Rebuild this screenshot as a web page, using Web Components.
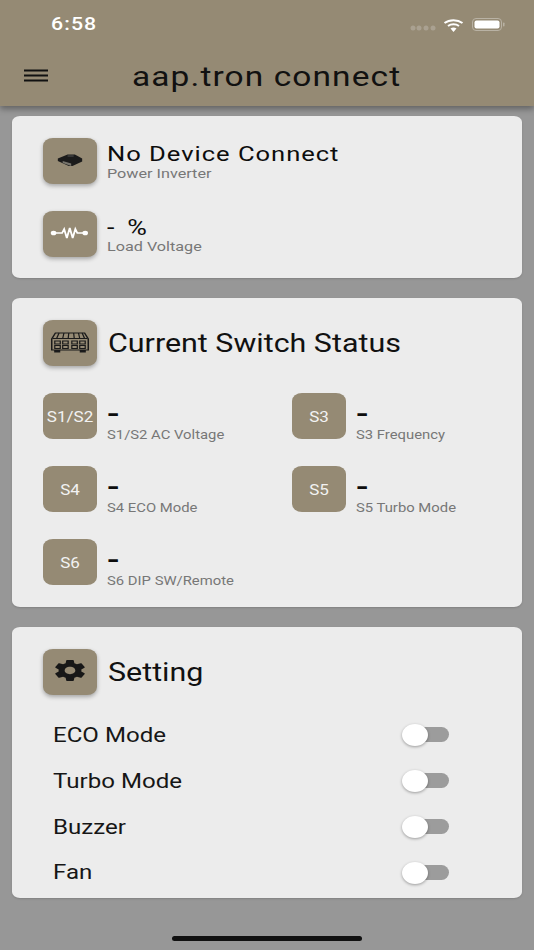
<!DOCTYPE html>
<html>
<head>
<meta charset="utf-8">
<title>aap.tron connect</title>
<style>
html, body { margin: 0; padding: 0; }
body {
    width: 534px;
    height: 950px;
    overflow: hidden;
    background: #979797;
    font-family: Roboto, "Liberation Sans", sans-serif;
    display: flex;
    flex-direction: column;
}
main { display: flex; flex-direction: column; gap: 20px; padding: 10px 12px 0; }
</style>
</head>
<body>
<app-bar title="aap.tron connect" time="6:58"></app-bar>
<main>
    <info-card style="--pad-bottom:21px">
        <stat-row value="No Device Connect" label="Power Inverter" wide>
            <svg viewBox="0 0 54 46" width="54" height="46">
                <path d="M17 21.500l8-4h6l6 4v3l-8 4.500h-3l-9-5z" fill="#1b1b1b"/>
                <path d="M21 24l7 2.500v2.500l-7-3z" fill="#77746c"/>
                <path d="M25 19h5" stroke="#555" stroke-width="1"/>
            </svg>
        </stat-row>
        <stat-row value="- %" label="Load Voltage" wide>
            <svg viewBox="0 0 54 46" width="54" height="46">
                <circle cx="13.500" cy="23" r="2.300" fill="#fff"/>
                <circle cx="39.500" cy="23" r="2.300" fill="#fff"/>
                <path d="M14 23h6.500l1.700-4 2.200 9 2.400-10 2.400 10 2.200-9 1.600 4h6" fill="none" stroke="#fff" stroke-width="1.500"/>
            </svg>
        </stat-row>
    </info-card>

    <info-card style="--pad-bottom:22px">
        <card-heading text="Current Switch Status">
            <svg viewBox="0 0 54 46" width="54" height="46" fill="none" stroke="#1a1a1a" stroke-width="1">
                <path d="M15 14h24l3 6v11H12V20z" stroke-width="1.200"/>
                <path d="M13 19.500h28M18 14l-2 5.500M22 14l-1 5.500M26 14l-.5 5.500M30 14l.5 5.500M34 14l1 5.500M37 14l2 5.500"/>
                <path d="M14 31h5v2.500h-5zM35 31h5v2.500h-5z" fill="#1a1a1a" stroke="none"/>
                <path d="M14.500 22h4.500v3h-4.500zM14.500 26.500h4.500v3h-4.500zM21 22h4.500v3H21zM21 26.500h4.500v3H21zM28.500 22H33v3h-4.500zM28.500 26.500H33v3h-4.500zM35 22h4.500v3H35zM35 26.500h4.500v3H35z"/>
            </svg>
        </card-heading>
        <div style="display:grid;grid-template-columns:249px 1fr;row-gap:27px">
            <stat-row value="-" label="S1/S2 AC Voltage" tile="S1/S2"></stat-row>
            <stat-row value="-" label="S3 Frequency" tile="S3"></stat-row>
            <stat-row value="-" label="S4 ECO Mode" tile="S4"></stat-row>
            <stat-row value="-" label="S5 Turbo Mode" tile="S5"></stat-row>
            <stat-row value="-" label="S6 DIP SW/Remote" tile="S6"></stat-row>
        </div>
    </info-card>

    <info-card style="--pad-bottom:3px;--gap:17px">
        <card-heading text="Setting">
            <svg viewBox="0 0 24 24" width="30" height="25" preserveAspectRatio="none" fill="#171717">
                <path fill-rule="evenodd" d="M19.430 12.980c.04-.32.07-.64.07-.98s-.03-.66-.07-.98l2.110-1.650c.19-.15.24-.42.12-.64l-2-3.460c-.12-.22-.39-.3-.61-.22l-2.490 1c-.52-.4-1.080-.73-1.690-.98l-.38-2.650C14.460 2.180 14.250 2 14 2h-4c-.25 0-.46.18-.49.42l-.38 2.650c-.61.25-1.170.59-1.690.98l-2.490-1c-.23-.09-.49 0-.61.22l-2 3.460c-.13.22-.07.49.12.64l2.110 1.650c-.04.32-.07.65-.07.98s.03.66.07.98l-2.110 1.650c-.19.15-.24.42-.12.64l2 3.460c.12.22.39.3.61.22l2.490-1c.52.4 1.080.73 1.690.98l.38 2.650c.03.24.24.42.49.42h4c.25 0 .46-.18.49-.42l.38-2.650c.61-.25 1.170-.59 1.690-.98l2.490 1c.23.09.49 0 .61-.22l2-3.460c.12-.22.07-.49-.12-.64l-2.110-1.650zM12 15.500c-1.930 0-3.500-1.570-3.500-3.500s1.570-3.500 3.500-3.500 3.500 1.570 3.500 3.500-1.570 3.500-3.500 3.500z"/>
            </svg>
        </card-heading>
        <div>
            <toggle-row label="ECO Mode"></toggle-row>
            <toggle-row label="Turbo Mode"></toggle-row>
            <toggle-row label="Buzzer"></toggle-row>
            <toggle-row label="Fan" style="height:45px"></toggle-row>
        </div>
    </info-card>
</main>
<home-bar></home-bar>

<script>
// the reference is stretched sideways, every text gets the same factor
const TEXT_STRETCH = 'display:inline-block;transform:scaleX(1.217);transform-origin:left center;white-space:nowrap;';

class AppBar extends HTMLElement {
    connectedCallback() {
        const title = this.getAttribute('title');
        const time = this.getAttribute('time');
        this.attachShadow({ mode: 'open' }).innerHTML = `
            <style>
                :host {
                    display: block;
                    height: 106px;
                    background: #958a74;
                    box-shadow: 0 3px 6px rgba(0,0,0,0.35);
                    position: relative;
                    z-index: 2;
                }
                .status {
                    height: 48px;
                    display: flex;
                    align-items: center;
                    padding: 0 28px 0 51px;
                    color: #fff;
                }
                .time { ${TEXT_STRETCH} font: 500 17.500px Roboto, sans-serif; letter-spacing: 0.9px; }
                .right { margin-left: auto; display: flex; align-items: center; }
                .toolbar { height: 58px; display: flex; align-items: center; }
                .menu { margin-left: 24px; margin-bottom: 3px; display: block; }
                .title { flex: 1; display: flex; justify-content: center; margin-right: 48px; margin-bottom: 2px; }
                .title span {
                    font: 400 27.500px Roboto, sans-serif;
                    letter-spacing: 0.9px;
                    color: #111;
                    display: inline-block;
                    transform: scaleX(1.217);
                    white-space: nowrap;
                }
            </style>
            <div class="status">
                <span class="time">${time}</span>
                <div class="right">
                    <svg width="26" height="6" viewBox="0 0 26 6" fill="#aaa191" style="margin-right:7px;margin-top:7px">
                        <circle cx="3" cy="3" r="2.500"/><circle cx="9" cy="3" r="2.500"/><circle cx="16" cy="3" r="2.500"/><circle cx="23" cy="3" r="2.500"/>
                    </svg>
                    <svg width="21" height="14" viewBox="0 0 20 14" style="margin-right:8px;margin-top:1px">
                        <path d="M1 5a13 10 0 0 1 18 0" fill="none" stroke="#fff" stroke-width="2"/>
                        <path d="M4.500 8a8 6 0 0 1 11 0" fill="none" stroke="#fff" stroke-width="2"/>
                        <path d="M7 10.500a4.500 3 0 0 1 6 0L10 14z" fill="#fff"/>
                    </svg>
                    <svg width="34" height="14" viewBox="0 0 34 14" style="margin-top:1px">
                        <rect x="0.500" y="0.500" width="29" height="12" rx="3.500" fill="none" stroke="#b9b2a4" stroke-width="1"/>
                        <rect x="2.500" y="2.500" width="25" height="8" rx="2" fill="#fff"/>
                        <rect x="31" y="4.500" width="1.500" height="4" rx="0.700" fill="#b9b2a4"/>
                    </svg>
                </div>
            </div>
            <div class="toolbar">
                <svg class="menu" width="24" height="14" viewBox="0 0 24 14" fill="#111">
                    <rect y="0.500" width="24" height="2"/><rect y="5.500" width="24" height="2"/><rect y="10.500" width="24" height="2"/>
                </svg>
                <div class="title"><span>${title}</span></div>
            </div>
        `;
    }
}

class InfoCard extends HTMLElement {
    constructor() {
        super();
        this.attachShadow({ mode: 'open' }).innerHTML = `
            <style>
                :host {
                    display: flex;
                    flex-direction: column;
                    gap: var(--gap, 27px);
                    background: #ececec;
                    border-radius: 8px / 6px;
                    padding: 22px 31px var(--pad-bottom, 22px);
                    box-shadow: 0 1px 2px rgba(0,0,0,0.15);
                }
            </style>
            <slot></slot>
        `;
    }
}

class IconTile extends HTMLElement {
    constructor() {
        super();
        this.attachShadow({ mode: 'open' }).innerHTML = `
            <style>
                :host {
                    flex: none;
                    display: flex;
                    align-items: center;
                    justify-content: center;
                    width: 54px;
                    height: 46px;
                    border-radius: 10px / 8px;
                    background: #958a74;
                    box-shadow: 0 2px 4px rgba(0,0,0,0.3);
                    color: #f2f2f2;
                    font: 400 14px Roboto, sans-serif;
                }
                :host([flat]) { box-shadow: none; padding-top: 1px; height: 45px; }
                span { ${TEXT_STRETCH} transform-origin: center; }
            </style>
            <span><slot></slot></span>
        `;
    }
}

class StatRow extends HTMLElement {
    connectedCallback() {
        const value = this.getAttribute('value');
        const label = this.getAttribute('label');
        const tile = this.getAttribute('tile');
        const wide = this.hasAttribute('wide');
        const valueFont = wide ? (value.length > 4 ? '400 21px/23px' : '400 22px/23px') : '500 30px/24px';
        this.attachShadow({ mode: 'open' }).innerHTML = `
            <style>
                :host { display: flex; gap: 10px; height: 46px; }
                .text { display: flex; flex-direction: column; padding-top: ${wide ? 5 : 9}px; }
                .value { ${TEXT_STRETCH} font: ${valueFont} Roboto, sans-serif; color: #0d0d0d; ${wide ? `letter-spacing:${value.length === 3 ? 2.6 : 0.8}px;` : ''} }
                .label { ${TEXT_STRETCH} font: 400 ${wide ? 13.300 : 12.200}px/16px Roboto, sans-serif; color: #777; margin-top: ${wide ? 0 : 1}px; }
            </style>
            ${tile ? `<icon-tile flat>${tile}</icon-tile>` : '<icon-tile><slot></slot></icon-tile>'}
            <div class="text">
                <span class="value">${value}</span>
                <span class="label">${label}</span>
            </div>
        `;
    }
}

class CardHeading extends HTMLElement {
    connectedCallback() {
        const text = this.getAttribute('text');
        this.attachShadow({ mode: 'open' }).innerHTML = `
            <style>
                :host { display: flex; align-items: center; gap: 11px; height: 46px; }
                span { ${TEXT_STRETCH} font: 400 25px Roboto, sans-serif; color: #111; }
            </style>
            <icon-tile><slot></slot></icon-tile>
            <span>${text}</span>
        `;
    }
}

class ToggleSwitch extends HTMLElement {
    constructor() {
        super();
        this.attachShadow({ mode: 'open' }).innerHTML = `
            <style>
                :host { display: block; position: relative; width: 47px; height: 22px; }
                .track {
                    position: absolute; left: 6px; right: 0; top: 3px; height: 15px;
                    border-radius: 8px; background: #9c9c9c;
                }
                .thumb {
                    position: absolute; left: 0; top: 0; width: 26px; height: 22px;
                    border-radius: 50%; background: #fff;
                    box-shadow: 0 1px 3px rgba(0,0,0,0.35);
                }
            </style>
            <div class="track"></div>
            <div class="thumb"></div>
        `;
    }
}

class ToggleRow extends HTMLElement {
    connectedCallback() {
        const label = this.getAttribute('label');
        this.attachShadow({ mode: 'open' }).innerHTML = `
            <style>
                :host {
                    display: flex;
                    align-items: center;
                    justify-content: space-between;
                    height: 46px;
                    padding: 0 42px 0 10px;
                }
                span { ${TEXT_STRETCH} font: 400 19.800px Roboto, sans-serif; color: #161616; }
            </style>
            <span>${label}</span>
            <toggle-switch></toggle-switch>
        `;
    }
}

class HomeBar extends HTMLElement {
    constructor() {
        super();
        this.attachShadow({ mode: 'open' }).innerHTML = `
            <style>
                :host { display: flex; justify-content: center; margin-top: auto; padding-bottom: 9px; }
                div { width: 190px; height: 5px; border-radius: 3px; background: #111; }
            </style>
            <div></div>
        `;
    }
}

customElements.define('app-bar', AppBar);
customElements.define('info-card', InfoCard);
customElements.define('icon-tile', IconTile);
customElements.define('stat-row', StatRow);
customElements.define('card-heading', CardHeading);
customElements.define('toggle-switch', ToggleSwitch);
customElements.define('toggle-row', ToggleRow);
customElements.define('home-bar', HomeBar);
</script>
</body>
</html>
